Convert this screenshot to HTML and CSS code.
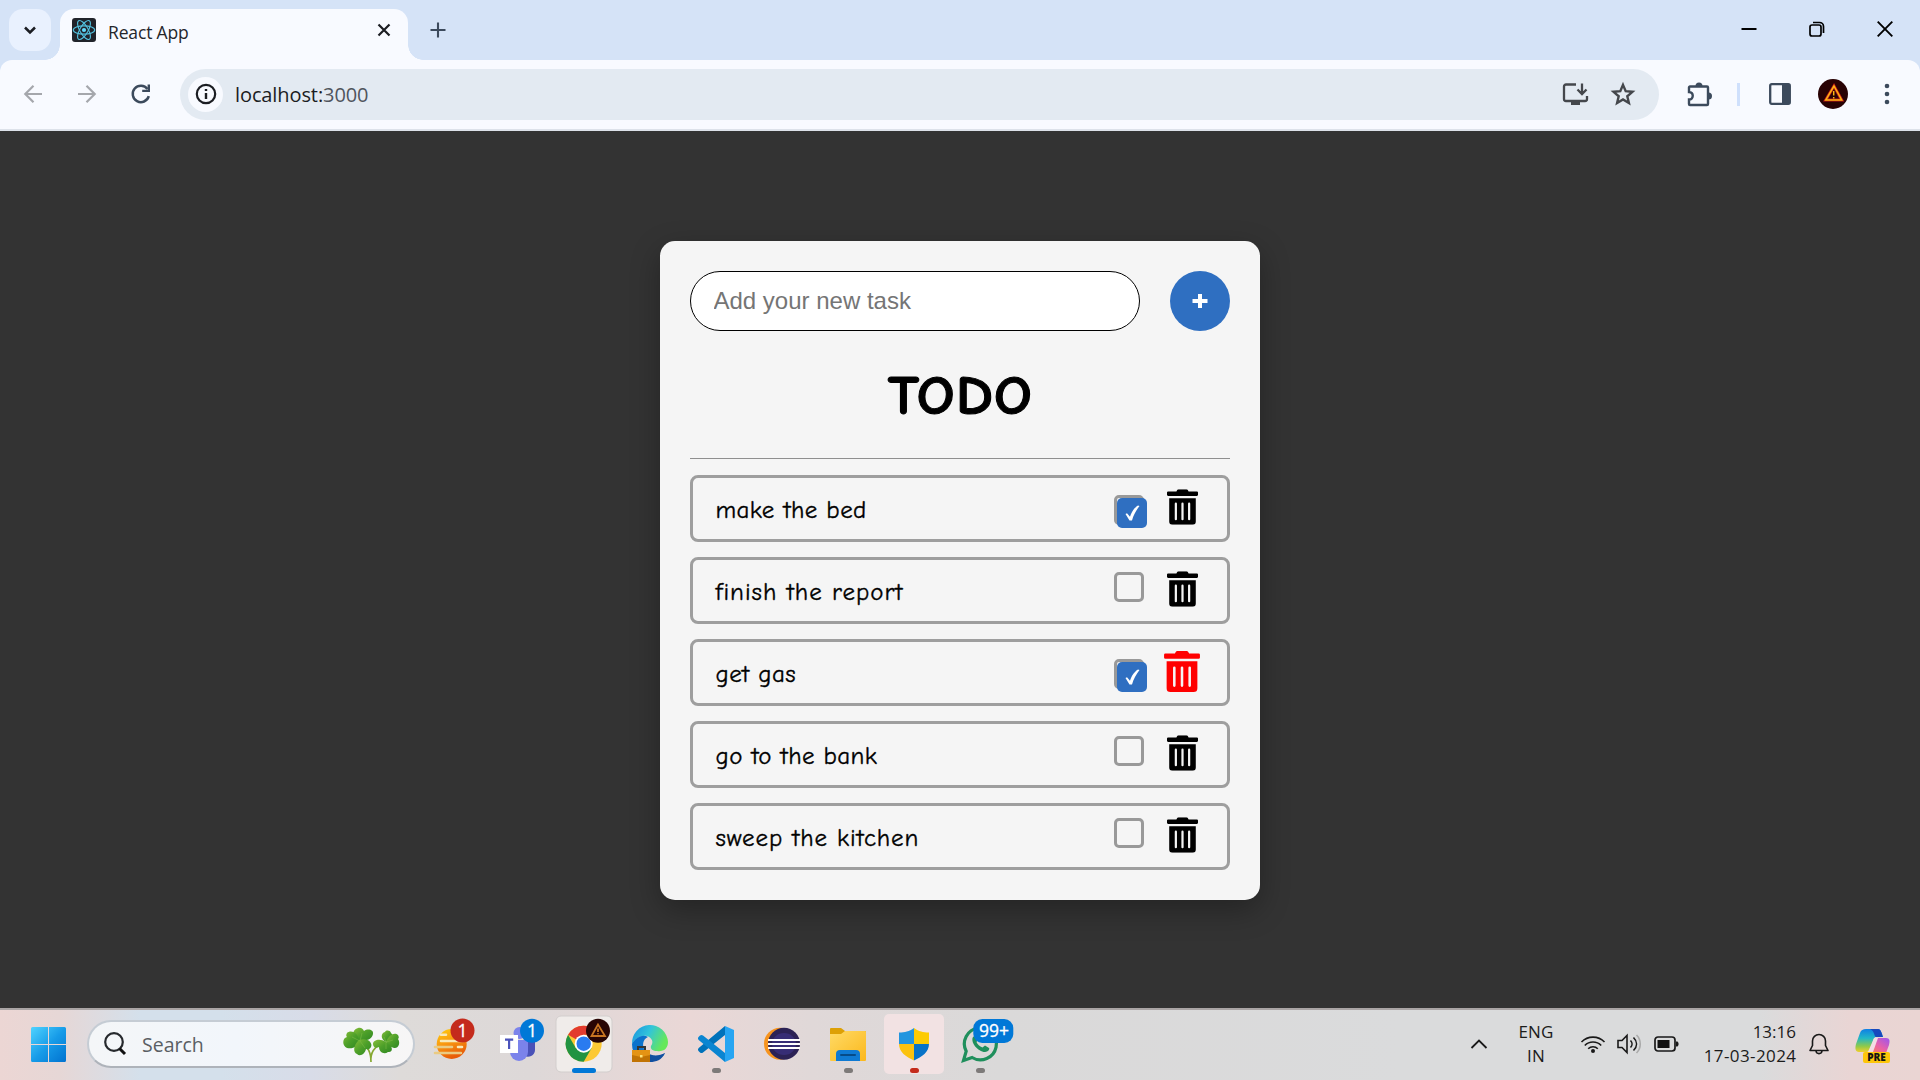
FILE: index.html
```html
<!DOCTYPE html>
<html lang="en">
<head>
<meta charset="utf-8">
<title>React App</title>
<link rel="stylesheet" href="styles.css">
</head>
<body>
<div class="screen">
  <header class="browser">
    <div class="tabstrip">
      <button class="tab-search" aria-label="Search tabs"><svg width="42" height="42" viewBox="0 0 42 42"><path d="M16 18.5l5 5 5-5" fill="none" stroke="#1b1d22" stroke-width="2.5"/></svg></button>
      <div class="tab">
        <svg class="favicon" width="24" height="24" viewBox="0 0 24 24"><rect width="24" height="24" rx="3" fill="#20232a"/><g fill="none" stroke="#53c1de" stroke-width="1.1"><ellipse cx="12" cy="12" rx="10.7" ry="4.1"/><ellipse cx="12" cy="12" rx="10.7" ry="4.1" transform="rotate(60 12 12)"/><ellipse cx="12" cy="12" rx="10.7" ry="4.1" transform="rotate(120 12 12)"/></g><circle cx="12" cy="12" r="2.1" fill="#61dafb"/></svg>
        <span class="tab-title">React App</span>
        <svg class="tab-close" width="14" height="14" viewBox="0 0 14 14"><path d="M1.5 1.5l11 11M12.500 1.500l-11 11" stroke="#1b1d22" stroke-width="2.2"/></svg>
      </div>
      <svg class="new-tab" width="16" height="16" viewBox="0 0 16 16"><path d="M8 .5v15M.5 8h15" stroke="#3c4a5c" stroke-width="2.1"/></svg>
      <div class="window-buttons">
        <svg width="16" height="16" viewBox="0 0 16 16"><path d="M.5 8h15" stroke="#000" stroke-width="2"/></svg>
        <svg width="16" height="16" viewBox="0 0 16 16"><g fill="none" stroke="#000" stroke-width="1.7"><rect x="1" y="4" width="11" height="11" rx="2"/><path d="M4 1.500h6.500a4 4 0 0 1 4 4v6.500"/></g></svg>
        <svg width="16" height="16" viewBox="0 0 16 16"><path d="M.7 .7l14.600 14.600M15.300 .7L.7 15.300" stroke="#000" stroke-width="1.900"/></svg>
      </div>
    </div>
    <div class="toolbar">
      <div class="nav">
        <svg width="20" height="20" viewBox="0 0 20 20"><path d="M19 10H2.500M10.500 1.800L2.300 10l8.200 8.200" fill="none" stroke="#a5a7ac" stroke-width="2.200"/></svg>
        <svg width="20" height="20" viewBox="0 0 20 20"><path d="M1 10h16.500M9.500 1.800L17.700 10l-8.200 8.200" fill="none" stroke="#a5a7ac" stroke-width="2.200"/></svg>
        <svg width="20" height="20" viewBox="0 0 20 20"><path d="M17.800 12.200A8.200 8.200 0 1 1 16.500 5" fill="none" stroke="#3c4a5c" stroke-width="2.500"/><path d="M19 .5v7.600h-7.800V5.800h5.400V.5z" fill="#3c4a5c"/></svg>
      </div>
      <div class="omnibox">
        <span class="site-info"><svg width="22" height="22" viewBox="0 0 22 22"><circle cx="11" cy="11" r="9.200" fill="none" stroke="#1b1d22" stroke-width="2.200"/><path d="M11 10v6M11 6v2" stroke="#1b1d22" stroke-width="2.400"/></svg></span>
        <span class="url">localhost:<span class="port">3000</span></span>
        <svg class="install" width="26" height="24" viewBox="0 0 26 24"><g fill="none" stroke="#44474c" stroke-width="2.300"><path d="M14 2.500H4a2 2 0 0 0-2 2V17a2 2 0 0 0 2 2h19a2 2 0 0 0 2-2v-3M20 1.500v10M15.500 7.500l4.500 4.500 4.500-4.500"/></g><path d="M9 19h9v4H9z" fill="#44474c"/></svg>
        <svg class="star" width="24" height="24" viewBox="0 0 24 24"><path d="M12 2.900l2.700 6.300 6.800.6-5.200 4.500 1.600 6.700-5.900-3.600L6.100 21l1.600-6.700-5.200-4.500 6.800-.6z" fill="none" stroke="#44474c" stroke-width="2.400"/></svg>
      </div>
      <div class="actions">
        <svg width="26" height="26" viewBox="0 0 26 26"><path d="M3 5.500h17a1 1 0 0 1 1 1V23a1 1 0 0 1-1 1H3a1 1 0 0 1-1-1v-4.500c5 0 5-7.500 0-7.500V6.500a1 1 0 0 1 1-1z" fill="none" stroke="#3c4a5c" stroke-width="2.400"/><path d="M8.500 5a3.500 3.500 0 0 1 7 0zM21.500 11.500a3.500 3.500 0 0 1 0 7z" fill="#3c4a5c"/></svg>
        <span class="divider"></span>
        <svg width="22" height="22" viewBox="0 0 22 22"><rect x="1.200" y="1.200" width="19.600" height="19.600" rx="1.500" fill="none" stroke="#3c4a5c" stroke-width="2.300"/><path d="M13 1h8v20h-8z" fill="#3c4a5c"/></svg>
        <svg class="avatar" width="30" height="30" viewBox="0 0 30 30"><circle cx="15" cy="15" r="15" fill="#280204"/><path d="M16 7L7.700 21h16z" fill="none" stroke="#c01818" stroke-width="3"/><path d="M16 7L7.700 21h16zM15.700 12v4.500M15.700 18v1.500" fill="none" stroke="#fcb414" stroke-width="1.500"/></svg>
        <svg class="menu" width="6" height="22" viewBox="0 0 6 22"><g fill="#3c4a5c"><circle cx="3" cy="3" r="2.300"/><circle cx="3" cy="11" r="2.300"/><circle cx="3" cy="19" r="2.300"/></g></svg>
      </div>
    </div>
  </header>

  <main class="page">
    <section class="card">
      <form class="add-form">
        <input class="task-input" type="text" placeholder="Add your new task">
        <button class="add-button" type="button" aria-label="Add"><svg width="16" height="16" viewBox="0 0 16 16"><path d="M8 1v14M.5 8h15" stroke="#fff" stroke-width="4"/></svg></button>
      </form>
      <h1 class="title"><span class="title-text">TODO</span></h1>
      <ul class="tasks">
        <li class="task done"><span class="task-name">make the bed</span><span class="check"><span class="tick"><svg width="30" height="30" viewBox="0 0 30 30"><path d="M8.500 16l1.500-.8 3 3.500C14.500 14 17.500 9.500 21 7.500l1.500.5c-3.500 4.500-6 9-7.500 14.500h-2.500z" fill="#fff"/></svg></span></span><svg class="trash" viewBox="0 0 448 512"><use href="#trash"/></svg></li>
        <li class="task"><span class="task-name wider">finish the report</span><span class="check"></span><svg class="trash" viewBox="0 0 448 512"><use href="#trash"/></svg></li>
        <li class="task done"><span class="task-name">get gas</span><span class="check"><span class="tick"><svg width="30" height="30" viewBox="0 0 30 30"><path d="M8.500 16l1.500-.8 3 3.500C14.500 14 17.500 9.500 21 7.500l1.500.5c-3.500 4.500-6 9-7.500 14.500h-2.500z" fill="#fff"/></svg></span></span><svg class="trash hovered" viewBox="0 0 448 512"><use href="#trash"/></svg></li>
        <li class="task"><span class="task-name">go to the bank</span><span class="check"></span><svg class="trash" viewBox="0 0 448 512"><use href="#trash"/></svg></li>
        <li class="task"><span class="task-name wide">sweep the kitchen</span><span class="check"></span><svg class="trash" viewBox="0 0 448 512"><use href="#trash"/></svg></li>
      </ul>
    </section>
  </main>

  <footer class="taskbar">
    <svg class="start" width="36" height="36" viewBox="0 0 36 36"><defs><linearGradient id="win" x1="0" y1="0" x2="36" y2="36" gradientUnits="userSpaceOnUse"><stop offset="0" stop-color="#50d3ff"/><stop offset=".5" stop-color="#169be8"/><stop offset="1" stop-color="#0070ce"/></linearGradient></defs><path d="M1.500 0H17v17H0V1.500A1.500 1.500 0 0 1 1.500 0zM18 0h15.500A1.500 1.500 0 0 1 35 1.500V17H18zM0 18h17V35H1.500A1.500 1.500 0 0 1 0 33.500zM18 18H35v15.500a1.500 1.500 0 0 1-1.500 1.500H18z" fill="url(#win)"/></svg>
    <div class="search">
      <svg class="lens" width="24" height="24" viewBox="0 0 24 24"><circle cx="11" cy="10" r="8.800" fill="none" stroke="#26292d" stroke-width="2.200"/><path d="M16.500 16.500l5.500 5.500" stroke="#111" stroke-width="3"/></svg>
      <span class="search-label">Search</span>
      <svg class="clover" width="60" height="38" viewBox="0 0 60 38"><defs><linearGradient id="leaf" x1="0" y1="0" x2="1" y2="1"><stop offset="0" stop-color="#86bd38"/><stop offset=".5" stop-color="#4c9f29"/><stop offset="1" stop-color="#2f8722"/></linearGradient></defs><path d="M29 37C29 27 26 22 19 17M29 37C28 28 33 21 42 17" fill="none" stroke="#86a832" stroke-width="1.700"/><g fill="url(#leaf)"><path d="M18 16C10 13 9 5 16 3c3-1 5 1 6 3 4-3 10-1 9 3-1 5-6 7-13 7z"/><path d="M17 16C16 6 8 5 5 8c-1 2-1 3 0 4-5 1-5 9 0 11 6 1 11-1 12-7z"/><path d="M17 15c9-3 14 3 12 7-1 2-3 3-5 2-1 5-6 8-9 5-4-1-4-9 2-14z"/></g><g fill="url(#leaf)"><path d="M44 17c-6-3-5-9-1-10 1-2 5-2 6 1 3 2 1 7-5 9z"/><path d="M44 17c3-8 9-10 12-7 1 2 1 3 0 4 3 4 0 10-4 9-4-1-6-3-8-6z"/><path d="M44 17c-6-4-13-2-13 2 0 3 3 5 6 3 0 5 5 8 9 5 5 1 6-6-2-10z"/></g><path d="M18 16l-8-4M18 16l2-8M18 16l5 7M44 17l-2-5M44 17l7-2M44 17l0 7" stroke="#7ab845" stroke-width=".6"/></svg>
    </div>
    <nav class="apps">
      <svg width="66" height="70" viewBox="0 0 66 70"><defs><linearGradient id="sun" x1="0" y1="0" x2=".4" y2="1"><stop offset="0" stop-color="#ffcf10"/><stop offset=".5" stop-color="#f99a10"/><stop offset="1" stop-color="#e85c08"/></linearGradient></defs><circle cx="32.700" cy="34" r="15" fill="url(#sun)"/><g stroke="#f8e9b8" stroke-width="2.600" stroke-linecap="round"><path d="M22 24.800h5M22 31h22M39 37h4"/><path d="M16 37h17M16 43h26" stroke="#eacb83"/></g><circle cx="43.500" cy="20.500" r="12" fill="#c42b1c"/><text class="badge" x="43.500" y="26.500">1</text></svg>
      <svg width="66" height="70" viewBox="0 0 66 70"><circle cx="34.500" cy="23" r="6" fill="#7b83eb"/><path d="M39 31h11v9a7 7 0 0 1-11 5.500z" fill="#4a52b8"/><path d="M25 30h18v12a9 9 0 0 1-18 0z" fill="#7b83eb"/><rect x="15" y="25" width="18" height="18" fill="#fff"/><path d="M20 29.700h8.200M24.100 29.500v9.500" stroke="#4b53bc" stroke-width="2.200"/><circle cx="47" cy="20.700" r="12" fill="#0078d7"/><text class="badge" x="47" y="27">1</text></svg>
      <svg width="66" height="70" viewBox="0 0 66 70"><rect x="5" y="6" width="56" height="56" rx="5" fill="#f0ecea" stroke="#d2cecd"/><circle cx="32.700" cy="33.700" r="18" fill="#fcc934"/><path d="M32.700 33.700L17.100 24.700A18 18 0 0 1 48.300 24.700H32.700z" fill="#e33b2e"/><path d="M17.100 24.700A18 18 0 0 0 32.700 51.700L40.500 38.200 32.700 33.700 24.900 38.200z" fill="#229342"/><circle cx="32.700" cy="33.700" r="9" fill="#fff"/><circle cx="32.700" cy="33.700" r="7.200" fill="#2a7bf0"/><circle cx="47" cy="20.700" r="12" fill="#280504"/><path d="M47 14.500L40.500 26h13.500zM47 18.500v3.500M47 23.300v1" fill="none" stroke="#c87522" stroke-width="1.800"/><rect x="21" y="58" width="24" height="5" rx="2.500" fill="#0078d7"/></svg>
      <svg width="66" height="70" viewBox="0 0 66 70"><defs><linearGradient id="edge" x1="0" y1="0" x2="1" y2=".4"><stop offset="0" stop-color="#168fe0"/><stop offset=".5" stop-color="#32c4da"/><stop offset="1" stop-color="#66e85a"/></linearGradient></defs><path d="M15 34a18 18 0 0 1 36-2c0 7-5 10-11 9-4 0-7-2-6-5 3-4 1-8-4-10-6-1-11 2-15 8z" fill="url(#edge)"/><path d="M15 34c4-7 11-10 16-7-5 2-7 9-2 15 4 5 14 5 19 1-8 14-33 11-33-9z" fill="#0c72cc"/><path d="M29 41c5 6 13 5 19 2-3 7-9 9-15 9-5-2-7-6-4-11z" fill="#114f9f"/><path d="M21 40v-3h7v3" fill="none" stroke="#353535" stroke-width="2"/><path d="M15 40h18v12H15z" fill="#c17304"/><path d="M15 40h18v5l-9 2-9-2z" fill="#e49314"/><rect x="23" y="45" width="2.500" height="2.500" fill="#ffe277"/></svg>
      <svg width="66" height="70" viewBox="0 0 66 70"><path d="M42 16v9L20 42.500c-1 .8-2 .7-3 0l-1.500-1.500c-.8-1-.6-2 .2-3z" fill="#0072ba"/><path d="M42 52v-9L20 25.500c-1-.8-2-.7-3 0L15.500 27c-.8 1-.6 2 .2 3z" fill="#0a85d1"/><path d="M42 16l9 4v28l-9 4z" fill="#27a5f2"/><rect x="29" y="58" width="9" height="5" rx="2.500" fill="#7d7a79"/></svg>
      <svg width="66" height="70" viewBox="0 0 66 70"><circle cx="31" cy="33.700" r="16" fill="#f7941e"/><circle cx="35" cy="33.700" r="16" fill="#2c2255"/><ellipse cx="35" cy="34" rx="12" ry="11" fill="#40358a" opacity=".6"/><path d="M19 30h32M19 34h32M19 38h32" stroke="#fff" stroke-width="2"/></svg>
      <svg width="66" height="70" viewBox="0 0 66 70"><defs><linearGradient id="folder" x1="0" y1="0" x2="1" y2="1"><stop offset="0" stop-color="#ffda66"/><stop offset="1" stop-color="#fbb81c"/></linearGradient></defs><path d="M15 19a1 1 0 0 1 1-1h10l4 3h20a1 1 0 0 1 1 1v10H15z" fill="#dda006"/><path d="M15 24h11l4-3h20a1 1 0 0 1 1 1v28a1 1 0 0 1-1 1H16a1 1 0 0 1-1-1z" fill="url(#folder)"/><path d="M21 51v-7a4 4 0 0 1 4-4h16a4 4 0 0 1 4 4v7z" fill="#0f7ad3"/><path d="M26 45h14" stroke="#064b88" stroke-width="2" stroke-linecap="round"/><rect x="29" y="58" width="9" height="5" rx="2.500" fill="#7d7a79"/></svg>
      <svg width="66" height="70" viewBox="0 0 66 70"><defs><clipPath id="shield"><path d="M33 18c5 3.500 9 4.500 15 4.500V34c0 8-7 13-15 16.500C25 47 18 42 18 34V22.500c6 0 10-1 15-4.500z"/></clipPath></defs><rect x="3" y="4" width="60" height="60" rx="5" fill="#f2e2e3"/><g clip-path="url(#shield)"><path d="M18 17h15v17H18z" fill="#2295df"/><path d="M33 17h15v17H33z" fill="#fdcb03"/><path d="M18 34h15v17H18z" fill="#fbc20f"/><path d="M33 34h15v17H33z" fill="#0873c8"/></g><rect x="29" y="58" width="9" height="5" rx="2.500" fill="#c42b1c"/></svg>
      <svg width="66" height="70" viewBox="0 0 66 70"><path d="M16.500 50.500l2.700-9.300a16 16 0 1 1 5.900 6.300z" fill="none" stroke="#1f8f5c" stroke-width="3.200"/><path d="M26 27c-3 5 5 15 12 15 3 0 5-3 4-4l-4-2.500-2.500 2c-3-1-5-3-6-5.500l2-2.500-2-4.500z" fill="#1f8f5c"/><rect x="26.300" y="9" width="40" height="24" rx="9" fill="#0078d7"/><text class="badge" x="47" y="27">99+</text><rect x="29" y="58" width="9" height="5" rx="2.500" fill="#7d7a79"/></svg>
    </nav>
    <div class="tray">
      <svg class="chevron" width="18" height="12" viewBox="0 0 18 12"><path d="M1.500 10L9 2.500l7.500 7.500" fill="none" stroke="#191919" stroke-width="1.800"/></svg>
      <div class="lang"><span>ENG</span><span>IN</span></div>
      <svg class="wifi" width="26" height="20" viewBox="0 0 26 20"><g fill="none" stroke="#191919" stroke-width="1.600"><path d="M1.500 8a16 16 0 0 1 23 0M4.800 11.500a11.500 11.500 0 0 1 16.400 0M8.200 14.800a6.800 6.800 0 0 1 9.600 0"/></g><circle cx="13" cy="17" r="2" fill="#191919"/></svg>
      <svg class="sound" width="26" height="22" viewBox="0 0 26 22"><g fill="none" stroke="#191919" stroke-width="1.600"><path d="M2 7.500h4l5-5v17l-5-5H2zM14.500 7.500c2 2 2 5 0 7M17.500 4.500c4 4 4 9 0 13"/><path d="M20.500 2c5 5 5 13 0 18" stroke="#aaa"/></g></svg>
      <svg class="battery" width="25" height="16" viewBox="0 0 25 16"><rect x="1" y="1" width="20" height="14" rx="3" fill="none" stroke="#191919" stroke-width="1.700"/><rect x="3.500" y="4" width="12" height="8" fill="#111"/><path d="M22 5.500h1.500L24.500 7v2l-1 1.500H22z" fill="#191919"/></svg>
      <div class="clock"><span>13:16</span><span class="date">17-03-2024</span></div>
      <svg class="bell" width="20" height="22" viewBox="0 0 20 22"><path d="M1 17.500l2.500-5V8a6.500 6.500 0 0 1 13 0v4.500l2.500 5zM7 18c.5 3.500 5.500 3.500 6 0" fill="none" stroke="#191919" stroke-width="1.600" stroke-linejoin="round"/></svg>
      <svg class="copilot" width="36" height="36" viewBox="0 0 36 36"><defs><linearGradient id="coA" x1="0" y1="0" x2="0" y2="1"><stop offset="0" stop-color="#0f7fe6"/><stop offset=".4" stop-color="#22b7c6"/><stop offset=".75" stop-color="#8fc94a"/><stop offset="1" stop-color="#f1cf2b"/></linearGradient><linearGradient id="coB" x1="1" y1="0" x2="0" y2="1"><stop offset="0" stop-color="#9a55f0"/><stop offset=".5" stop-color="#e860a8"/><stop offset="1" stop-color="#ff8a4a"/></linearGradient></defs><path d="M11 1h12c3 0 4 5 5 8h-8c-3 4-4 14-8 15H4c-4 0-4-4-3-8l4-11c1-3 3-4 6-4z" fill="url(#coA)"/><path d="M15 1h8c3 0 4 5 5 8h-7c-2 0-1-6-6-8z" fill="#1748bd"/><path d="M22 10h9c4 0 4 3 3 7l-3 8H12c4-1 5-4 7-10 1-3 1-5 3-5z" fill="url(#coB)"/><path d="M19 10h4l-5 14h-5z" fill="#f4dce4"/><rect x="8" y="24" width="27" height="11" rx="2" fill="#fdc60a"/><text class="pre" x="21.500" y="33">PRE</text></svg>
    </div>
  </footer>
</div>
<svg class="symbols" aria-hidden="true"><symbol id="trash" viewBox="0 0 448 512"><path d="M32 464a48 48 0 0 0 48 48h288a48 48 0 0 0 48-48V128H32zm272-256a16 16 0 0 1 32 0v224a16 16 0 0 1-32 0zm-96 0a16 16 0 0 1 32 0v224a16 16 0 0 1-32 0zm-96 0a16 16 0 0 1 32 0v224a16 16 0 0 1-32 0zM432 32H312l-9.400-18.700A24 24 0 0 0 281.100 0H166.800a23.720 23.720 0 0 0-21.400 13.300L136 32H16A16 16 0 0 0 0 48v32a16 16 0 0 0 16 16h416a16 16 0 0 0 16-16V48a16 16 0 0 0-16-16z"/></symbol></svg>
</body>
</html>
```
FILE: styles.css
```css
* { box-sizing: border-box; }
body { margin: 0; font-family: "Open Sans", "Noto Sans", sans-serif; overflow: hidden; }
svg { display: block; flex: none; overflow: visible; }
button { border: 0; padding: 0; }
.symbols { display: none; }
.screen { width: 1920px; height: 1080px; display: grid; grid-template-rows: 131px 877px 72px; }

/* Browser frame */
.browser { background: #d5e3f7; }
.tabstrip { height: 60px; display: flex; align-items: flex-start; padding: 9px 20px 0 9px; }
.tab-search { width: 42px; height: 42px; border-radius: 14px; background: #e9f1fe; }
.tab { position: relative; width: 348px; height: 51px; margin-left: 9px; padding: 0 17px 9px 12px; display: flex; align-items: center; background: #f8faff; border-radius: 14px 14px 0 0; }
.tab::before, .tab::after { content: ""; position: absolute; bottom: 0; width: 15px; height: 15px; }
.tab::before { left: -15px; background: radial-gradient(circle at 0 0, transparent 14.500px, #f8faff 15px); }
.tab::after { right: -15px; background: radial-gradient(circle at 100% 0, transparent 14.500px, #f8faff 15px); }
.tab-title { margin-left: 12px; padding-top: 3px; font-size: 17.500px; letter-spacing: -.15px; color: #24262b; }
.tab-close { margin-left: auto; }
.new-tab { margin: 13px 0 0 22px; }
.window-buttons { margin: 12px 7px 0 auto; display: flex; gap: 52px; }
.toolbar { height: 71px; display: flex; align-items: center; padding: 0 30px 1px 23px; background: #f8faff; border-bottom: 2px solid #dde2ea; border-radius: 12px 12px 0 0; }
.nav { display: flex; gap: 34px; width: 157px; }
.omnibox { width: 1479px; height: 51px; border-radius: 26px; background: #e3eaf2; display: flex; align-items: center; padding: 0 24px 0 8px; }
.site-info { width: 35px; height: 35px; border-radius: 50%; background: #f8faff; display: grid; place-items: center; }
.url { margin-left: 12px; font-size: 20px; letter-spacing: -.1px; color: #1b1d22; }
.port { color: #50555d; }
.install { margin-left: auto; }
.star { margin-left: 23px; }
.actions { display: flex; align-items: center; padding-left: 28px; }
.divider { width: 3px; height: 23px; margin: 0 29px 0 24px; background: #cfe0fc; }
.avatar { margin: 0 36px 0 27px; }

/* Todo application */
.page { background: #333; padding-top: 110px; }
.card { width: 600px; height: 659px; margin: 0 auto; padding: 30px; background: #f5f5f5; border-radius: 15px; box-shadow: 0 10px 30px rgba(0, 0, 0, .3); }
.add-form { display: flex; justify-content: space-between; }
.task-input { width: 450px; height: 60px; border: 1px solid #000; border-radius: 30px; padding: 0 22.500px; font: 24px "Liberation Sans", Arial, sans-serif; background: #fff; }
.task-input::placeholder { color: #757575; }
.add-button { width: 60px; height: 60px; border-radius: 50%; background: #2f6fc1; display: grid; place-items: center; }
.title, .task-name { font-family: "Comic Sans MS", "Comic Neue", cursive; color: #000; }
.title { height: 128px; margin: 0; border-bottom: 1px solid #8f8f8f; line-height: 132px; font-size: 54px; text-align: center; }
.title-text { display: inline-block; transform: scaleX(1.11); letter-spacing: .8px; margin-right: -.8px; -webkit-text-stroke: 1px #000; paint-order: stroke fill; }
.tasks { list-style: none; margin: 16px 0 0; padding: 0; display: grid; gap: 15px; }
.task { height: 67px; border: 3px solid #9e9e9e; border-radius: 8px; display: flex; align-items: flex-start; padding: 0 29px 0 22.500px; }
.task-name { flex: 1; line-height: 63px; font-size: 25px; letter-spacing: .38px; -webkit-text-stroke: .35px #000; }
.task-name.wide { letter-spacing: .86px; }
.task-name.wider { letter-spacing: .98px; }
.check { width: 30px; height: 30px; margin-top: 12px; border: 3px solid #999; border-radius: 5px; }
.done .check { margin-top: 17px; }
.tick { display: block; width: 30px; height: 30px; border-radius: 5px; background: #2f6fc1; }
.trash { width: 31px; height: 36px; margin: 11px 0 0 23px; }
.trash.hovered { width: 36px; height: 41px; margin: 9px -2px 0 20px; fill: #f00; }

/* Windows taskbar */
.taskbar { display: flex; align-items: flex-start; border-top: 2px solid #aaa5a5; background: linear-gradient(90deg, #ecd6d4 0, #e6d7d6 60px, #d4e0eb 140px, #d4e0eb 220px, #d8dce8 310px, #dedbd9 400px, #ddd8d8 530px, #ead7d6 690px, #e0d8d8 810px, #dad9d9 1000px, #dadbdc 1400px, #dadbdc 1760px, #e9d5d4 1850px, #ead5d3 100%); }
.start { margin: 17px 0 0 31px; }
.search { flex: none; width: 328px; height: 48px; margin: 10px 0 0 20px; padding: 0 11px 0 14px; border: 2px solid #c5ccd4; border-bottom-color: #aeb3ba; border-radius: 24px; display: flex; align-items: center; background: linear-gradient(90deg, #f4f6f8, #f2f6fb 45%, #f7f6f6); }
.search-label { margin-left: 15px; font-size: 19.500px; color: #5a5e63; }
.clover { margin-left: auto; }
.apps { display: flex; margin-left: 4px; }
.badge { font-size: 17.500px; fill: #fff; text-anchor: middle; stroke: #fff; stroke-width: .3px; }
.tray { flex: 1; height: 70px; display: flex; align-items: center; padding: 0 29px 2px 0; font-size: 17px; line-height: 24px; color: #1b1b1b; }
.chevron { margin-left: auto; }
.lang { width: 40px; margin-left: 28px; display: grid; text-align: center; letter-spacing: .2px; }
.wifi { margin-left: 24px; }
.sound { margin-left: 10px; }
.battery { margin-left: 12px; }
.clock { width: 117px; display: grid; text-align: right; }
.date { letter-spacing: .4px; margin-right: -.4px; }
.bell { margin-left: 13px; }
.copilot { margin-left: 26px; margin-top: 3px; }
.pre { font-size: 10px; font-weight: 800; text-anchor: middle; fill: #141414; }
```
